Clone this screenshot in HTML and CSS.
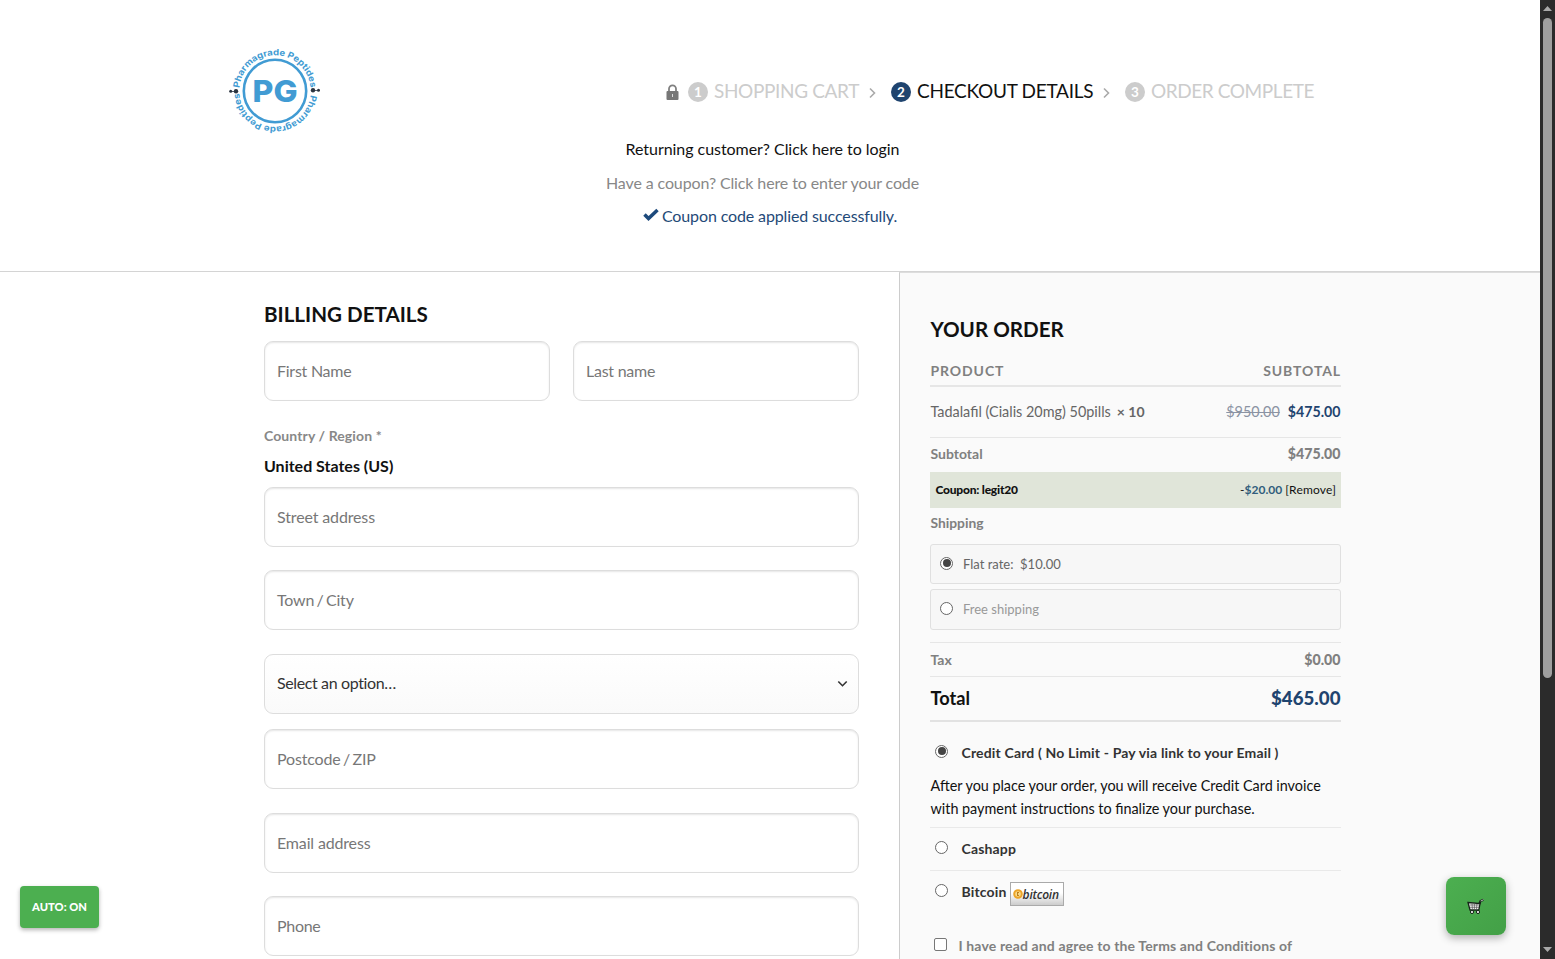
FILE: index.html
```html
<!DOCTYPE html>
<html lang="en">
<head>
<meta charset="utf-8">
<title>Checkout</title>
<link rel="stylesheet" href="styles.css">
</head>
<body>
<div class="page">
  <header class="header">
    <div class="header-row">
      <svg class="logo" width="96" height="90" viewBox="0 0 96 90">
        <defs>
          <path id="ring-top" d="M12.200 44 A35.800 35.800 0 0 1 83.800 44"/>
          <path id="ring-bottom" d="M83.800 44 A35.800 35.800 0 0 1 12.200 44"/>
        </defs>
        <circle cx="48" cy="44" r="31.200" fill="none" stroke="#419bd3" stroke-width="2.600"/>
        <text class="logo-initials" x="48" y="54.500" text-anchor="middle" textLength="45" lengthAdjust="spacingAndGlyphs">PG</text>
        <text class="logo-ring"><textPath href="#ring-top" startOffset="3" textLength="106" lengthAdjust="spacingAndGlyphs">Pharmagrade Peptides</textPath></text>
        <text class="logo-ring"><textPath href="#ring-bottom" startOffset="4" textLength="106" lengthAdjust="spacingAndGlyphs">Pharmagrade Peptides</textPath></text>
        <g fill="#2b3440"><circle cx="3.700" cy="44.300" r="1.500"/><circle cx="9" cy="44.300" r="2.200"/><circle cx="86" cy="43.300" r="2.200"/><circle cx="91.500" cy="43.300" r="1.500"/><path d="M3 43.900h7v.8H3zM86 43h6v.8h-6z"/></g>
      </svg>
      <nav class="steps">
        <svg class="lock" width="13" height="17" viewBox="0 0 13 17"><path d="M3 8V4.800a3.500 3.500 0 0 1 7 0V8" fill="none" stroke="#808080" stroke-width="1.800"/><rect x=".5" y="7" width="12" height="9" rx="1" fill="#777"/><path d="M6 10h1v3H6z" fill="#ddd"/></svg>
        <span class="num n1">1</span><span class="step s1">SHOPPING CART</span>
        <svg class="chev c1" width="7" height="12" viewBox="0 0 7 12"><path d="M1 1.500 5.500 6 1 10.500"/></svg>
        <span class="num n2">2</span><span class="step s2">CHECKOUT DETAILS</span>
        <svg class="chev c2" width="7" height="12" viewBox="0 0 7 12"><path d="M1 1.500 5.500 6 1 10.500"/></svg>
        <span class="num n3">3</span><span class="step s3">ORDER COMPLETE</span>
      </nav>
    </div>
    <div class="notices">
      <p class="login">Returning customer? Click here to login</p>
      <p class="coupon-hint">Have a coupon? Click here to enter your code</p>
      <p class="success"><svg width="16" height="13" viewBox="0 0 16 13"><path d="M1.500 6.500 5.500 10.500 14.500 2" fill="none" stroke="#1d4a7c" stroke-width="3.500"/></svg><span>Coupon code applied successfully.</span></p>
    </div>
  </header>
  <main class="content">
    <section class="billing">
      <h2 class="billing-title"><span>BILLING DETAILS</span></h2>
      <div class="pair"><div class="field first"><span>First Name</span></div><div class="field last"><span>Last name</span></div></div>
      <div class="country-label"><span>Country / Region *</span></div>
      <div class="country"><span>United States (US)</span></div>
      <div class="field street"><span>Street address</span></div>
      <div class="field town"><span>Town / City</span></div>
      <div class="field select"><span>Select an option…</span><svg width="11" height="8" viewBox="0 0 11 8"><path d="M1.300 1.500 5.500 5.700 9.700 1.500" fill="none" stroke="#333" stroke-width="1.600"/></svg></div>
      <div class="field zip"><span>Postcode / ZIP</span></div>
      <div class="field email"><span>Email address</span></div>
      <div class="field phone"><span>Phone</span></div>
    </section>
    <aside class="order">
      <h2 class="order-title"><span>YOUR ORDER</span></h2>
      <div class="row head"><span class="th1">PRODUCT</span><span class="th2">SUBTOTAL</span></div>
      <div class="row product"><span><span class="name">Tadalafil (Cialis 20mg) 50pills</span><b class="qty">× 10</b></span><span><del>$950.00</del><b class="price">$475.00</b></span></div>
      <div class="row subtotal"><span>Subtotal</span><b>$475.00</b></div>
      <div class="row coupon"><b class="code">Coupon: legit20</b><span class="discount">-<b>$20.00</b> <i>[Remove]</i></span></div>
      <div class="row shipping"><span>Shipping</span></div>
      <div class="option"><i class="radio on"></i><span class="flat">Flat rate:&nbsp; $10.00</span></div>
      <div class="option free"><i class="radio"></i><span>Free shipping</span></div>
      <div class="row tax"><span>Tax</span><b>$0.00</b></div>
      <div class="row total"><span class="total-label">Total</span><b>$465.00</b></div>
      <div class="pay credit"><i class="radio on"></i><span>Credit Card ( No Limit - Pay via link to your Email )</span></div>
      <div class="desc"><p class="d1">After you place your order, you will receive Credit Card invoice</p><p class="d2">with payment instructions to finalize your purchase.</p></div>
      <div class="pay cash"><i class="radio"></i><span>Cashapp</span></div>
      <div class="pay bit"><i class="radio"></i><span>Bitcoin</span>
        <div class="btc"><svg width="10" height="10" viewBox="0 0 10 10"><circle cx="5" cy="5" r="3.800" fill="#f8d98a" stroke="#eda528" stroke-width="2"/><path d="M4.600 3v4M4.600 3.500h1.300M4.600 6.500h1.300" stroke="#b97912"/></svg><span>bitcoin</span></div>
      </div>
      <div class="agree"><i class="box"></i><span>I have read and agree to the Terms and Conditions of</span></div>
    </aside>
  </main>
</div>
<div class="scrollbar">
  <svg width="9" height="6" viewBox="0 0 9 6"><path d="M4.500 0 9 5H0z" fill="#aaa"/></svg>
  <div class="thumb"></div>
  <svg class="down" width="9" height="6" viewBox="0 0 9 6"><path d="M4.500 5 9 0H0z" fill="#aaa"/></svg>
</div>
<div class="auto"><span>AUTO: ON</span></div>
<div class="cart"><svg width="18" height="17" viewBox="0 0 18 17"><path d="M12.300 6 13.500 3l3-1.300" fill="none" stroke="#17251a" stroke-width="2.200"/><path d="M1 4.500 13 5.500l-1.200 6.500H3z" fill="#f4f4f4" stroke="#17251a" stroke-width="1.300"/><path d="M2.500 7h9.700M3 9.300h9M5 5.500l.4 5.500M7.400 5.500V11M9.900 6l-.4 5" stroke="#555" stroke-width=".7"/><circle cx="5" cy="14" r="1.600" fill="#eee" stroke="#17251a"/><circle cx="11" cy="14" r="1.600" fill="#eee" stroke="#17251a"/><path d="M13.700 3l2.800-1.200" stroke="#ddd" stroke-width=".8"/></svg></div>
</body>
</html>
```
FILE: styles.css
```css
* { box-sizing: border-box; }
body { margin: 0; width: 1555px; height: 959px; overflow: hidden; display: flex; background: #fff; font-family: Lato, sans-serif; font-size: 16px; color: #777; }
p, h2 { margin: 0; }
i { font-style: normal; }
span, b, del { white-space: nowrap; }
.page { width: 1540px; height: 959px; overflow: hidden; flex: none; }
.header { height: 272px; border-bottom: 1px solid #d4d4d4; padding-top: 47px; }
.header-row { display: flex; height: 89px; padding-left: 227px; }
.logo { flex: none; }
.logo-initials { font: 800 30px Inter, sans-serif; fill: #419bd3; }
.logo-ring { font: 700 8.800px Inter, sans-serif; fill: #419bd3; }
.steps { display: flex; align-items: center; margin-left: 343px; height: 90px; font-size: 19px; color: #ccc; }
.lock { margin-right: 9px; }
.num { width: 20px; height: 20px; border-radius: 50%; background: #ccc; color: #fff; font-size: 13.500px; font-weight: 700; line-height: 20px; text-align: center; flex: none; margin-right: 6px; }
.n2 { background: #1f446f; }
.step { line-height: 24px; margin-top: -2px; }
.s1 { width: 145px; letter-spacing: -.35px; }
.s2 { width: 177px; color: #111; letter-spacing: -.27px; }
.s3 { width: 165px; letter-spacing: -.42px; }
.chev path { fill: none; stroke: #aaa; stroke-width: 1.600; }
.c1 { margin: 2px 15px 0 10px; }
.c2 { margin: 2px 15px 0 9px; }
.notices { width: 1525px; text-align: center; }
.notices p { height: 33.500px; line-height: 25px; }
.login { color: #111; letter-spacing: -.05px; }
.notices .coupon-hint { color: #888; letter-spacing: -.12px; }
.notices .success { color: #1f4a78; display: flex; justify-content: center; gap: 3px; padding-left: 15px; letter-spacing: -.13px; }
.success svg { margin-top: 5px; }
.content { display: flex; height: 687px; }
.billing { width: 899px; padding: 28px 40px 0 264px; flex: none; }
h2 { font-size: 20.600px; line-height: 28px; font-weight: 700; color: #111; }
.pair { display: flex; gap: 23px; margin-top: 13px; }
.pair .field { flex: 1; }
.field { height: 60px; border: 1px solid #ddd; border-radius: 9px; box-shadow: inset 0 1px 2px rgba(0,0,0,.1); padding: 0 12px 2px; display: flex; align-items: center; justify-content: space-between; color: #777; }
.first, .last { letter-spacing: -.25px; }
.country-label { margin-top: 25px; height: 20px; line-height: 20px; font-size: 14px; font-weight: 700; color: #888; letter-spacing: .1px; }
.country { margin-top: 8px; height: 24px; line-height: 24px; font-weight: 700; color: #111; }
.street { margin-top: 9px; letter-spacing: -.14px; }
.town { margin-top: 23px; letter-spacing: -.2px; word-spacing: -1.500px; }
.select { margin-top: 24px; color: #333; padding: 0 10px 3px 12px; background: linear-gradient(#fff, #fafafa); box-shadow: none; letter-spacing: -.38px; }
.select svg { margin-top: 3px; }
.zip { margin-top: 15px; letter-spacing: -.16px; word-spacing: -1.500px; }
.email { margin-top: 24px; letter-spacing: -.16px; }
.phone { margin-top: 23px; letter-spacing: -.3px; }
.order { flex: 1; border-left: 1px solid #ccc; border-top: 1px solid #ddd; background: #fafafa; padding: 42px 199px 0 30px; font-size: 14.400px; }
.order-title { padding-left: .5px; }
.row { display: flex; justify-content: space-between; align-items: center; font-weight: 700; color: #808080; padding: 0 .5px; }
.head { height: 44px; border-bottom: 2px solid #e6e6e6; padding-top: 13px; letter-spacing: .9px; font-size: 14px; }
.th2 { margin-right: -.5px; }
.product { height: 51px; border-bottom: 1px solid #e6e6e6; font-weight: 400; color: #666; padding-bottom: 2px; }
.qty { margin-left: 6px; font-size: 14px; }
.price { margin-left: 8px; color: #1f446f; }
.product del { color: #8b93a3; }
.subtotal { height: 34px; padding-bottom: 3px; font-size: 14px; }
.subtotal b, .tax b, .price { font-size: 14.200px; }
.coupon { height: 36px; background: #e0e5d9; color: #111; padding: 0 5px 2px 5.500px; font-size: 12px; }
.code { letter-spacing: -.22px; }
.discount { font-weight: 400; }
.discount b { color: #315d7c; }
.discount i { letter-spacing: .18px; }
.shipping { height: 31px; margin-bottom: 5px; padding-bottom: 2px; font-size: 13.800px; }
.option { height: 40px; border: 1px solid #e0e0e0; border-radius: 3px; background: #f7f7f7; display: flex; align-items: center; padding-left: 9px; gap: 10px; font-size: 13px; color: #666; }
.option .radio { margin-top: -2px; }
.free { margin-top: 5px; height: 41px; color: #999; padding-bottom: 1px; }
.radio { width: 13px; height: 13px; border: 1px solid #666; border-radius: 50%; background: #fff; display: flex; align-items: center; justify-content: center; flex: none; }
.radio.on::after { content: ""; width: 8px; height: 8px; border-radius: 50%; background: #444; }
.tax { height: 35px; margin-top: 12px; border-top: 1px solid #e6e6e6; border-bottom: 1px solid #e6e6e6; font-size: 14px; }
.total { height: 45px; border-bottom: 2px solid #e2e2e2; font-size: 18.200px; color: #111; padding-bottom: 2px; }
.total b { color: #1f446f; font-size: 18.700px; }
.pay { display: flex; align-items: center; padding-left: 5px; gap: 13.500px; font-weight: 700; color: #333; font-size: 14px; letter-spacing: .16px; }
.pay > .radio { margin-top: -3px; }
.credit { height: 61px; }
.desc { height: 44px; line-height: 23px; margin-top: -9px; padding-left: .5px; color: #111; font-size: 14.400px; white-space: nowrap; word-spacing: -.15px; }
.cash { height: 44px; margin-top: 9px; border-top: 1px solid #e9e9e9; border-bottom: 1px solid #e9e9e9; padding-bottom: 1px; }
.bit { height: 43px; padding-bottom: 1px; }
.bit > span { margin-top: -2px; }
.btc { width: 54px; height: 24px; margin: 4px 0 0 -10.500px; border: 1px solid #aaa; background: linear-gradient(#fff 45%, #ccc); display: flex; align-items: center; padding-left: 2px; }
.btc span { font: italic 600 12px "Open Sans", sans-serif; color: #333; letter-spacing: -.2px; }
.agree { display: flex; align-items: center; height: 30px; margin-top: 16px; padding-left: 4px; gap: 11.500px; font-weight: 700; color: #808080; font-size: 14px; letter-spacing: .14px; }
.box { width: 13px; height: 13px; border: 1px solid #777; border-radius: 2px; background: #fff; margin-top: -2px; flex: none; }
.scrollbar { width: 15px; height: 959px; background: #2b2b2b; display: flex; flex-direction: column; align-items: center; padding-top: 6px; }
.thumb { width: 9px; height: 660px; margin-top: 6px; border-radius: 5px; background: #9f9f9f; }
.scrollbar .down { margin-top: 269px; }
.auto { position: absolute; left: 20px; top: 886px; width: 79px; height: 42px; border-radius: 4px; background: #4caf50; color: #fff; font-size: 11.200px; font-weight: 900; display: flex; align-items: center; justify-content: center; padding-bottom: 1px; box-shadow: 0 2px 4px rgba(0,0,0,.3); }
.cart { position: absolute; left: 1446px; top: 877px; width: 60px; height: 58px; border-radius: 8px; background: linear-gradient(135deg, #4caf50, #43a047); display: flex; align-items: center; justify-content: center; box-shadow: 0 3px 8px rgba(0,0,0,.3); }
```
